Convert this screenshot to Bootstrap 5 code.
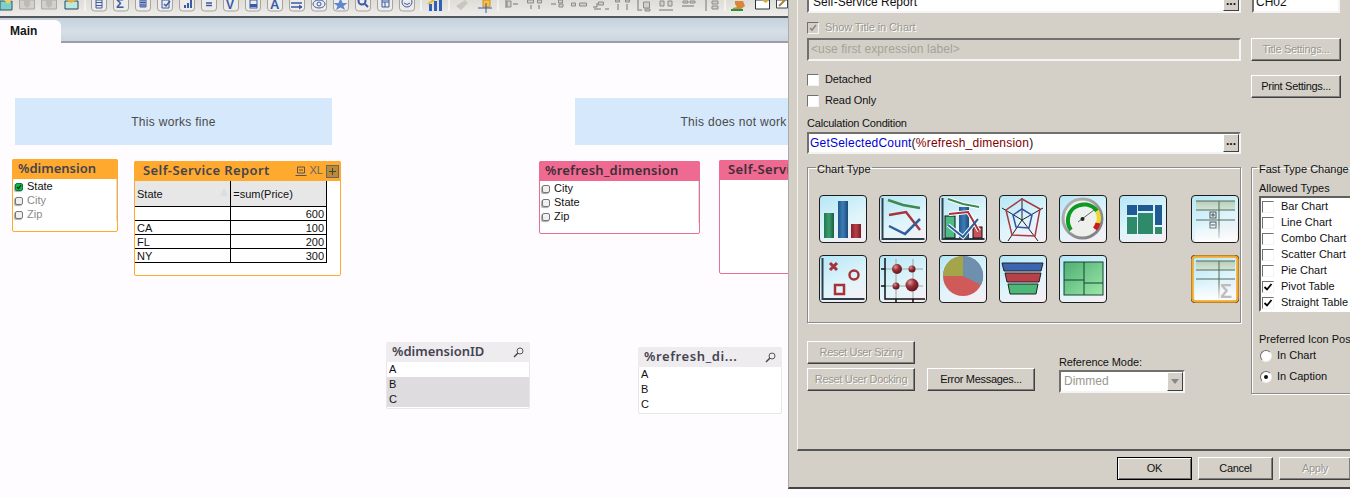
<!DOCTYPE html>
<html lang="en"><head><meta charset="utf-8"><title>Self-Service Report</title>
<link href="https://cdn.jsdelivr.net/npm/bootstrap@5.3.0/dist/css/bootstrap.min.css" rel="stylesheet">
<style>
html,body{height:497px;overflow:hidden;background:#fefcff;margin:0}
body{font-family:"Liberation Sans",Arial,sans-serif;font-size:11px;color:#111;line-height:1.2}
.app-shell{width:1350px;height:497px}
.main-col{width:788px;flex:none;height:497px}
.tool-strip{height:18px;background:linear-gradient(#dfddd8,#eeece8);border-bottom:2px solid #55565a;flex:none;overflow:hidden}
.tool-strip svg{display:block}
.tab-strip{height:25px;flex:none;background:linear-gradient(#c4d2df,#d6dee8 60%,#cdd4dc);border-bottom:2px solid #9a9ea6;display:flex;align-items:flex-end}
.tab-main{width:61px;height:23px;margin-bottom:-2px;background:#fefcff;border-top-right-radius:6px;font-weight:700;font-size:12px;padding:4px 0 0 10px;color:#151515}
.sheet{position:relative;flex:1;background:#fefcff;overflow:hidden}
.sheet-canvas{position:absolute;inset:0 -20px 0 0}
.note-box{position:absolute;top:55px;width:317px;height:47px;padding-top:2px;background:#d6e8fb;color:#4a4a4a;font-size:12px;letter-spacing:.3px;display:flex;align-items:center;justify-content:center}
.note-a{left:15px}.note-b{left:575px}
.qv-obj{position:absolute;background:#fff;border:1px solid #ccc;border-radius:2px}
.qv-cap{height:20px;display:flex;align-items:center;font-family:"Noto Sans",sans-serif;font-weight:600;font-size:13px;color:#444450;white-space:nowrap;overflow:hidden;margin:-1px -1px 0;padding-left:6px;border-radius:2px 2px 0 0}
.cap-orange{background:#ffa92e}.cap-pink{background:#ee6a90;color:#3f2d39}.cap-grey{background:#efecef}
.cap-wide{letter-spacing:.4px;padding-left:9px}
.cap-ref{letter-spacing:.25px}
.cap-rdi{letter-spacing:.6px}
.bd-orange{border-color:#ffa92e}.bd-pink{border-color:#e96f91}
.obj-dim{left:12px;top:116px;width:106px;height:73px}
.obj-ssr{left:134px;top:118px;width:207px;height:115px}
.obj-ref{left:539px;top:118px;width:161px;height:73px}
.obj-ssr2{left:719px;top:117px;width:207px;height:114px}
.obj-did{left:386px;top:299px;width:144px;height:67px;border-color:#e8e6e8}
.obj-rdi{left:638px;top:304px;width:144px;height:67px;border-color:#e8e6e8}
.lb-row{height:14px;display:flex;align-items:center;gap:4px;padding-left:2px;font-size:11px}
.lb-list{padding-top:1px;border-right:1px solid #ddd;height:42px}
.lb-ex{color:#8a8a8a}
.lb-box{width:8px;height:8px;border:1px solid #777;border-radius:2px;background:#f0f0f0;box-shadow:-1px 1px 1px #aaa;flex:none}
.lb-on{background:#11b93a;border-color:#075;position:relative}
.lb-on svg{display:block}
.cap-tools{margin-left:auto;display:flex;align-items:center;gap:3px;padding-right:2px;font-size:11px;font-weight:400;color:#666;letter-spacing:0;font-family:"Liberation Sans",sans-serif}
.grid-tbl{width:192px;border-collapse:collapse;table-layout:fixed;font-size:11px}
.grid-tbl td,.grid-tbl th{border:1px solid #000;border-top:0;height:14px;padding:1px 2px 0;font-weight:400;line-height:12px}
.grid-tbl th{background:#e8e7e8;height:25px;border-bottom:1px solid #000}
.grid-tbl tr>*:first-child{border-left:0}
.grid-tbl .num{text-align:right}
.sort-tri{float:right;width:0;height:0;border:4px solid transparent;border-bottom:8px solid #ddd;margin-top:-4px}
.vl-row{height:15px;padding-left:2px;font-size:11px;display:flex;align-items:center}
.vl-alt{background:#dedcde}
.mag{margin-left:auto;margin-right:6px}
.dlg{width:562px;height:489px;flex:none;background:#d4d0c8;position:relative;border-left:1px solid #aaa;border-bottom:2px solid #444;overflow:hidden}
.dlg-panel{height:451px;margin-left:8px;border-left:1px solid #f4f2ee;border-bottom:2px solid #555;padding-left:9px;display:flex;gap:10px}
.col-l{width:434px;flex:none}
.col-r{width:110px;flex:none}
.fld{background:#fff;border:2px solid;border-color:#707070 #f4f4f4 #f4f4f4 #707070;display:flex;align-items:center;padding-left:2px;overflow:hidden;white-space:nowrap;font-size:12px}
.fld-top{height:21px;margin-top:-8px;padding-left:4px}
.fld-dis{background:#d4d0c8;height:23px;color:#a5a29b;margin-top:4px;letter-spacing:.1px}
.fld-calc{height:22px;margin-top:2px;padding-left:1px;letter-spacing:.22px}
.dots{margin-left:auto;width:16px;height:100%;background:#d4d0c8;border:1px solid;border-color:#fff #404040 #404040 #fff;font-weight:700;line-height:12px;text-align:center;flex:none;letter-spacing:0}
.kw{color:#0000d8}.fn{color:#800000}.pl{color:#111}
.chk-row{display:flex;align-items:center;gap:6px;height:12px;font-size:11px;letter-spacing:-.1px}
.win-chk{width:12px;height:12px;flex:none;background:#fff;border:1px solid;border-color:#707070 #f4f4f4 #f4f4f4 #707070}
.win-chk svg{display:block}
.chk-dis{background:#d4d0c8}
.txt-dis{color:#9a978f;text-shadow:1px 1px 0 #fff}
.row-a{margin-top:9px}.row-b{margin-top:13px}
.lbl-calc{margin-top:9px;height:14px;font-size:11px;letter-spacing:-.2px;line-height:14px}
.grp{border:1px solid #8a8a8a;box-shadow:inset 1px 1px 0 #fff,1px 1px 0 #fff;padding:0;margin:0}
.grp legend{float:none;width:auto;font-size:11px;line-height:12px;margin:0 0 0 8px;padding:4px 1px 0}
.grp-chart{margin-top:5px;height:164px}
.icon-grid{display:grid;grid-template-columns:repeat(7,48px);grid-auto-rows:48px;gap:12px;padding:20px 0 0 11px}
.chart-ico{width:48px;height:48px;border:1px solid #1c1c1c;border-radius:4px;background:linear-gradient(155deg,#b5e6f6,#dff5fb 55%,#f8eef3);overflow:hidden}
.chart-ico svg{display:block}
.ico-pivot{margin-left:12px}
.ico-sel{grid-column:7;margin-left:12px;border:none;box-shadow:0 0 0 1px #222 inset}
.btn.dlg-btn,.btn.dlg-btn:disabled{background:#d4d0c8;color:#111;font-size:11px;letter-spacing:-.3px;line-height:1;padding:0;border-radius:0;border:1px solid;border-color:#fff #404040 #404040 #fff;box-shadow:inset -1px -1px 0 #808080;opacity:1;white-space:nowrap;font-family:inherit;height:23px}
.btn.dlg-btn:disabled{color:#9a978f;text-shadow:1px 1px 0 #fff}
.bt-r{width:108px}
.bt-err{margin-left:12px}
.bt-s{width:90px}
.bt-title{margin-top:25px}
.bt-print{margin-top:14px}
.low-row{margin-top:18px;display:flex;align-items:flex-end}
.ref-wrap{margin-left:24px;width:126px;margin-bottom:-2px}
.ref-lbl{font-size:11px;letter-spacing:-.1px;line-height:14px;margin-bottom:1px}
.combo{height:23px;background:#fff;border:2px solid;border-color:#707070 #f4f4f4 #f4f4f4 #707070;display:flex;align-items:center;padding-left:3px;color:#9a978f;font-size:12px}
.combo-arw{margin-left:auto;width:16px;height:100%;background:#d4d0c8;border:1px solid;border-color:#fff #404040 #404040 #fff;display:flex;align-items:center;justify-content:center}
.combo-arw i{display:block;border:4px solid transparent;border-top:5px solid #888;margin-top:4px}
.fld-id{height:21px;margin:-8px 10px 0 1px;width:88px}
.grp-fast{width:140px;margin-top:61px;height:235px;padding-left:7px}
.grp .lg-fast{margin-left:-2px;padding:4px 2px 0;white-space:nowrap}
.lbl-allowed{font-size:11px;line-height:14px;margin-top:6px}
.type-list{margin-top:1px;height:116px;background:#fff;border:2px solid;border-color:#606060 #fff #fff #606060;padding-top:1px}
.type-row{height:16px;display:flex;align-items:center;gap:7px;font-size:11px;padding-left:1px;white-space:nowrap}
.pref-lbl{font-size:11px;line-height:14px;margin-top:20px;white-space:nowrap}
.rad-row{display:flex;align-items:center;gap:5px;height:12px;font-size:11px;margin-top:4px;padding-left:1px}
.rad-row.rd2{margin-top:9px}
.rad{width:12px;height:12px;border-radius:50%;background:#fff;border:1px solid;border-color:#707070 #eee #eee #707070;flex:none;display:flex;align-items:center;justify-content:center}
.rad i{display:block;width:4px;height:4px;background:#111;border-radius:50%}
.dlg-foot{height:36px;display:flex;justify-content:flex-end;padding-top:6px;gap:6px}
.bt-f{width:75px;height:23px}
.btn.bt-ok{border:1px solid #000;box-shadow:inset 1px 1px 0 #fff,inset -1px -1px 0 #707070}
.bt-apply{margin-right:-1px;width:72px}
.defs-svg{position:absolute;width:0;height:0}
</style></head><body>
<svg class="defs-svg" aria-hidden="true"><defs>
<linearGradient id="gG" x1="0" x2="1"><stop offset="0" stop-color="#1e7a50"/><stop offset=".5" stop-color="#3d9c70"/><stop offset="1" stop-color="#185f3f"/></linearGradient>
<linearGradient id="gB" x1="0" x2="1"><stop offset="0" stop-color="#1f5a92"/><stop offset=".5" stop-color="#3f7cb5"/><stop offset="1" stop-color="#1a4977"/></linearGradient>
<linearGradient id="gR" x1="0" x2="1"><stop offset="0" stop-color="#8c2028"/><stop offset=".5" stop-color="#b64048"/><stop offset="1" stop-color="#7a1a22"/></linearGradient>
<radialGradient id="gBall" cx=".35" cy=".3" r=".75"><stop offset="0" stop-color="#d89a9a"/><stop offset=".45" stop-color="#9a2e36"/><stop offset="1" stop-color="#5d1519"/></radialGradient>
<linearGradient id="gT" x1="0" x2="0" y1="0" y2="1"><stop offset="0" stop-color="#b6cdb8"/><stop offset="1" stop-color="#d3e6d6"/></linearGradient>
<linearGradient id="gF" x1="0" x2="0" y1="0" y2="1"><stop offset="0" stop-color="#fff" stop-opacity="0"/><stop offset="1" stop-color="#fff" stop-opacity=".9"/></linearGradient>
<linearGradient id="gM" x1="0" y1="0" x2="1" y2="1"><stop offset="0" stop-color="#4fae74"/><stop offset="1" stop-color="#9ce8a8"/></linearGradient>
<linearGradient id="gGa" x1="0" y1="0" x2="1" y2="1"><stop offset="0" stop-color="#bbb"/><stop offset="1" stop-color="#777"/></linearGradient>
</defs></svg>
<div class="app-shell d-flex">
<div class="main-col d-flex flex-column">
<div class="tool-strip">
<svg width="788" height="16" viewBox="0 0 788 16" role="img" aria-label="Toolbar">
<g fill="#edecE8" stroke="#a7a49d">
<rect x="91.5" y="-6" width="15" height="17" rx="3"/><rect x="113.5" y="-6" width="15" height="17" rx="3"/><rect x="135.5" y="-6" width="15" height="17" rx="3"/><rect x="157.5" y="-6" width="15" height="17" rx="3"/><rect x="179.5" y="-6" width="15" height="17" rx="3"/><rect x="201.5" y="-6" width="15" height="17" rx="3"/><rect x="223.5" y="-6" width="15" height="17" rx="3"/><rect x="245.5" y="-6" width="15" height="17" rx="3"/><rect x="267.5" y="-6" width="15" height="17" rx="3"/><rect x="289.5" y="-6" width="15" height="17" rx="3"/><rect x="311.5" y="-6" width="15" height="17" rx="3"/><rect x="333.5" y="-6" width="15" height="17" rx="3"/><rect x="355.5" y="-6" width="15" height="17" rx="3"/><rect x="377.5" y="-6" width="15" height="17" rx="3"/><rect x="399.5" y="-6" width="15" height="17" rx="3"/>
</g>
<path d="M0 1h12v9H0z" fill="#7fd0c8" stroke="#356"/><path d="M4 0l4 4 4-4z" fill="#f0d060"/>
<path d="M19.500 0h15v9h-15z M41.500 0h15v9h-15z" fill="#d2d0ca" stroke="#aaa"/><path d="M24 0h6v5l-3 3-3-3zM46 0h6v5l-3 3-3-3z" fill="#bdbab3"/>
<path d="M65 1h13v8H65z" fill="#bfe8dc" stroke="#246"/><path d="M66 0l5 3 6-3z" fill="#e8b040"/>
<path d="M85 0v11" stroke="#fff"/>
<g fill="none" stroke="#3a5aa8">
<path d="M96 0h6v8h-6zM96 2.500h6M96 5.500h6"/>
<path d="M140 0h6v7h-6zM142 0v7M144 0v7M140 2.500h6M140 5h6"/>
<path d="M162 0h7v8h-7z"/><path d="M164 4l2 2 4-5" stroke-width="1.500"/>
<path d="M206 3h6M206 5.500h6" stroke-width="1.600"/>
<rect x="250" y="0" width="7" height="8"/><path d="M250 5.500h7" stroke-width="3"/>
<path d="M291 3h11M291 7h11" stroke-width="1.500"/><path d="M299 5l3 2-3 2" fill="#3a5aa8"/>
<ellipse cx="319" cy="4" rx="6" ry="4"/><circle cx="319" cy="4" r="2"/>
<circle cx="362" cy="1" r="3.500" stroke-width="2"/><path d="M365 4l3 3" stroke-width="2"/>
<path d="M382 0h7v7h-7zM382 2h7M385 2v5"/>
<circle cx="407" cy="2" r="5"/><path d="M404 3q3 3 6 0"/>
</g>
<g fill="#3a5aa8">
<text x="116" y="8" font-family="Liberation Sans" font-weight="700" font-size="13">Σ</text>
<text x="226" y="9" font-family="Liberation Sans" font-weight="700" font-size="12">V</text>
<text x="270" y="9" font-family="Liberation Sans" font-weight="700" font-size="13">A</text>
<path d="M184 5h2v3h-2zM187 3h2v5h-2zM190 0h2v8h-2z"/>
<path d="M340.500 -2l2 5h5l-4 3 1.500 4-4.500-2.500-4.500 2.500 1.500-4-4-3h5z" fill="#5f86d0"/>
</g>
<path d="M421 0v11M449 0v11M498 0v11M725 0v11" stroke="#fff"/>
<path d="M429 4h3v7h-3zM434 1h3v10h-3zM439 0h3v11h-3z" fill="#2d62b8"/><path d="M428 4l6-4" stroke="#e8b828" stroke-width="2"/>
<path d="M456 6l9-6 3 3-7 7z" fill="#c9c6c0"/><path d="M483 0h7v7h-7z" fill="#f5bf4a" stroke="#d09020"/><path d="M478 8h14M486 3v10" stroke="#3a5aa8"/>
<g fill="#d2d0ca" stroke="#8e8c86">
<path d="M507 1h4v6h-4zM527.500 0h6v3h-6zM537.500 0h4v3h-4zM558.500 0h4v3h-4zM559 4h4v3h-4zM571.500 3h4v3h-4zM579.500 3h7v3h-7zM598.500 2h5v3h-5zM615.500 0h4v2h-4zM625.500 0h4v2h-4zM643.500 2h6v6h-6zM645 9h5v2h-5zM660 1h4v5h-4zM668 1h4v5h-4zM683 1h5v2h-5zM690 1h5v2h-5zM712 1h6v3h-6zM712 6h6v3h-6z"/>
</g>
<g stroke="#777" fill="none">
<path d="M506 0v8M513 4h5M531 5v4M539 5v4M551 4h5M593 7h4v-4M594 9h7M605 9h4M618 4v6M627 4v6M638 0v9M637 10h5M659 10h14M682 6h12M706 0v11"/>
</g>
<path d="M735 1l8 0 2 5-4 3v2l4 0v0h-13l1-3 4-1-2-3z" fill="#d9853a"/><path d="M731 9h12v2h-12z" fill="#1a9a3a"/>
<path d="M755.500 0h14v9h-14z" fill="#fff" stroke="#234"/><path d="M761 0h8l-3 3z" fill="#d8a848"/>
<path d="M776.500 0h11v8h-11z" fill="#fff" stroke="#345"/><path d="M779 6l6-6" stroke="#b08030" stroke-width="2"/>
</svg>
</div>
<div class="tab-strip"><div class="tab-main">Main</div></div>
<div class="sheet"><div class="sheet-canvas">
<div class="note-box note-a">This works fine</div>
<div class="note-box note-b">This does not work</div>

<div class="qv-obj bd-orange obj-dim">
<div class="qv-cap cap-orange">%dimension</div>
<div class="lb-list">
<div class="lb-row"><span class="lb-box lb-on"><svg width="6" height="6" viewBox="0 0 6 6"><path d="M1 3l1.500 1.500L5 1" fill="none" stroke="#021" stroke-width="1.200"/></svg></span>State</div>
<div class="lb-row lb-ex"><span class="lb-box"></span>City</div>
<div class="lb-row lb-ex"><span class="lb-box"></span>Zip</div>
</div></div>

<div class="qv-obj bd-orange obj-ssr">
<div class="qv-cap cap-orange cap-wide">Self-Service Report
<span class="cap-tools"><svg width="12" height="11" viewBox="0 0 12 11"><path d="M2.500 1h7v6h-7zM.5 9.500h11M4 4h4" fill="none" stroke="#555"/></svg><span>XL</span><svg width="13" height="13" viewBox="0 0 13 13"><rect x=".5" y=".5" width="12" height="12" fill="#b98a38" stroke="#666"/><path d="M3 6.500h7M6.500 3v7" stroke="#443"/></svg></span></div>
<table class="grid-tbl"><tbody>
<tr><th>State<span class="sort-tri"></span></th><th>=sum(Price)</th></tr>
<tr><td></td><td class="num">600</td></tr>
<tr><td>CA</td><td class="num">100</td></tr>
<tr><td>FL</td><td class="num">200</td></tr>
<tr><td>NY</td><td class="num">300</td></tr>
</tbody></table></div>

<div class="qv-obj bd-pink obj-ref">
<div class="qv-cap cap-pink cap-ref">%refresh_dimension</div>
<div class="lb-list">
<div class="lb-row"><span class="lb-box"></span>City</div>
<div class="lb-row"><span class="lb-box"></span>State</div>
<div class="lb-row"><span class="lb-box"></span>Zip</div>
</div></div>

<div class="qv-obj bd-pink obj-ssr2"><div class="qv-cap cap-pink cap-wide">Self-Service Report</div></div>

<div class="qv-obj obj-did">
<div class="qv-cap cap-grey">%dimensionID<svg class="mag" width="11" height="11" viewBox="0 0 11 11"><circle cx="7" cy="4" r="3" fill="#eee" stroke="#555"/><path d="M5 6L1 10" stroke="#444" stroke-width="1.500"/></svg></div>
<div class="vl-row">A</div><div class="vl-row vl-alt">B</div><div class="vl-row vl-alt">C</div></div>

<div class="qv-obj obj-rdi">
<div class="qv-cap cap-grey cap-rdi">%refresh_di...<svg class="mag" width="11" height="11" viewBox="0 0 11 11"><circle cx="7" cy="4" r="3" fill="#eee" stroke="#555"/><path d="M5 6L1 10" stroke="#444" stroke-width="1.500"/></svg></div>
<div class="vl-row">A</div><div class="vl-row">B</div><div class="vl-row">C</div></div>
</div></div>
</div>

<div class="dlg">
<div class="dlg-panel">
<div class="col-l">
<div class="fld fld-top">Self-Service Report<span class="dots">...</span></div>
<div class="chk-row row-a txt-dis"><span class="win-chk chk-dis"><svg width="10" height="10" viewBox="0 0 10 10"><path d="M2 5l2 2 4-5" fill="none" stroke="#8a8880" stroke-width="1.600"/></svg></span>Show Title in Chart</div>
<div class="fld fld-dis">&lt;use first expression label&gt;</div>
<div class="chk-row row-b"><span class="win-chk"></span>Detached</div>
<div class="chk-row row-a"><span class="win-chk"></span>Read Only</div>
<div class="lbl-calc">Calculation Condition</div>
<div class="fld fld-calc"><span class="kw">GetSelectedCount</span><span class="pl">(</span><span class="fn">%refresh_dimension</span><span class="pl">)</span><span class="dots">...</span></div>

<fieldset class="grp grp-chart"><legend>Chart Type</legend>
<div class="icon-grid">
<div class="chart-ico"><svg width="46" height="46" viewBox="0 0 46 46"><rect x="4" y="17" width="10" height="25" fill="url(#gG)"/><rect x="18" y="5" width="10" height="37" fill="url(#gB)"/><rect x="31" y="28" width="10" height="14" fill="url(#gR)"/></svg></div>
<div class="chart-ico"><svg width="46" height="46" viewBox="0 0 46 46"><path d="M2.500 2v41h42" fill="none" stroke="#30404a" stroke-width="2"/><g fill="none" stroke-width="2.500"><path d="M8 4l15 5 17 3" stroke="#3c8a50"/><path d="M9 19l17-3 14 18" stroke="#a8323a"/><path d="M9 30l16 8 15-15" stroke="#2f5fa0"/></g></svg></div>
<div class="chart-ico"><svg width="46" height="46" viewBox="0 0 46 46"><path d="M2.500 2v41h42" fill="none" stroke="#30404a" stroke-width="2"/><rect x="5" y="20" width="10" height="22" fill="#4cbc85" stroke="#111"/><rect x="19" y="11" width="10" height="31" fill="url(#gB)"/><rect x="33" y="31" width="9" height="11" fill="#c9535a" stroke="#111"/><g fill="none"><path d="M8 3l15 5 16 3" stroke="#fff" stroke-width="4"/><path d="M9 18l19-2 11 19" stroke="#fff" stroke-width="4"/><path d="M8 29l15 12 15-18" stroke="#fff" stroke-width="4"/><path d="M8 3l15 5 16 3" stroke="#3c8a50" stroke-width="2"/><path d="M9 18l19-2 11 19" stroke="#a8323a" stroke-width="2"/><path d="M8 29l15 12 15-18" stroke="#2f5fa0" stroke-width="2"/></g></svg></div>
<div class="chart-ico"><svg width="46" height="46" viewBox="0 0 46 46"><path d="M22 24L22 2M22 24L43 12M22 24L38 45M22 24L8 45M22 24L2 12" stroke="#222" fill="none"/><path d="M22 3l18 10-5 27-23-1-6-25z" fill="none" stroke="#a83a44" stroke-width="1.500"/><path d="M22 13l10 6-3 13-13-1-3-12z" fill="none" stroke="#3a50a8" stroke-width="1.500"/></svg></div>
<div class="chart-ico"><svg width="46" height="46" viewBox="0 0 46 46"><circle cx="22.500" cy="22.500" r="21" fill="url(#gGa)"/><circle cx="22.500" cy="22.500" r="18" fill="#eef0ee"/><path d="M11 34A16 16 0 1 1 37 15" fill="none" stroke="#0c9a22" stroke-width="4"/><path d="M37 15A16 16 0 0 1 38 27" fill="none" stroke="#ecd92a" stroke-width="4"/><path d="M38 27A16 16 0 0 1 35 33" fill="none" stroke="#d01818" stroke-width="5"/><path d="M18 26L34 14" stroke="#666"/><circle cx="22.500" cy="23" r="2" fill="#222"/></svg></div>
<div class="chart-ico"><svg width="46" height="46" viewBox="0 0 46 46"><rect x="7" y="9" width="10" height="10" fill="#1f5a92"/><rect x="18" y="9" width="15" height="6" fill="#1f5a92"/><rect x="7" y="21" width="10" height="17" fill="#2e8a6a"/><rect x="18" y="17" width="15" height="21" fill="#2e8a6a"/><rect x="35" y="9" width="7" height="20" fill="#1f5a92"/><rect x="35" y="31" width="7" height="7" fill="#2e8a6a"/></svg></div>
<div class="chart-ico ico-pivot"><svg width="46" height="46" viewBox="0 0 46 46"><rect x="4" y="5" width="39" height="9" fill="url(#gT)"/><path d="M4 5h39M4 14h39M4 24h39M27 5v37" stroke="#55685a" fill="none"/><rect x="18" y="16" width="6" height="6" fill="none" stroke="#555"/><path d="M19 19h4M21 17v4" stroke="#555"/><rect x="18" y="26" width="6" height="6" fill="none" stroke="#555"/><path d="M19 29h4" stroke="#555"/><rect x="3" y="28" width="42" height="18" fill="url(#gF)"/></svg></div>
<div class="chart-ico"><svg width="46" height="46" viewBox="0 0 46 46"><path d="M2.500 2v41h42" fill="none" stroke="#30404a" stroke-width="2"/><path d="M10 7l7 7M17 7l-7 7" stroke="#a8323a" stroke-width="3"/><circle cx="34" cy="19" r="4.500" fill="none" stroke="#a8323a" stroke-width="2.500"/><rect x="15" y="29" width="9" height="9" fill="none" stroke="#a8323a" stroke-width="2.500"/></svg></div>
<div class="chart-ico"><svg width="46" height="46" viewBox="0 0 46 46"><path d="M5 13h38M5 30h38M16 3v40M33 3v40" stroke="#9aa8a8" fill="none"/><path d="M5 2v41h40M1 13h4M1 30h4M16 43v3M33 43v3" fill="none" stroke="#111" stroke-width="1.500"/><circle cx="17" cy="13" r="5" fill="url(#gBall)"/><circle cx="32" cy="13" r="3.500" fill="url(#gBall)"/><circle cx="16" cy="30" r="3.500" fill="url(#gBall)"/><circle cx="32" cy="29" r="6.500" fill="url(#gBall)"/></svg></div>
<div class="chart-ico"><svg width="46" height="46" viewBox="0 0 46 46"><circle cx="23" cy="20" r="20" fill="#cf5a58"/><path d="M23 20V0A20 20 0 0 0 3 20z" fill="#a3a548"/><path d="M23 20V0A20 20 0 0 1 41 29z" fill="#6f8fae"/></svg></div>
<div class="chart-ico"><svg width="46" height="46" viewBox="0 0 46 46"><path d="M2 7h41l-2 8H4z" fill="#3d64b0" stroke="#222"/><path d="M5 17h36l-2 9H7z" fill="#b84048" stroke="#222"/><path d="M8 28h30l-2 10H10z" fill="#4cb878" stroke="#222"/></svg></div>
<div class="chart-ico"><svg width="46" height="46" viewBox="0 0 46 46"><rect x="4" y="6" width="39" height="33" fill="url(#gM)" stroke="#143"/><path d="M24 6v33M4 24h20M24 27h19" stroke="#143" fill="none"/></svg></div>
<div class="chart-ico ico-sel"><svg width="48" height="48" viewBox="0 0 48 48"><rect x="1.500" y="1.500" width="45" height="45" rx="3" fill="none" stroke="#f5a72a" stroke-width="2.500"/><rect x="5" y="6" width="39" height="9" fill="url(#gT)"/><path d="M5 6h39M5 15h39M5 24h39M28 6v38" stroke="#55685a" fill="none"/><rect x="4" y="28" width="41" height="17" fill="url(#gF)"/><text x="29" y="43" font-family="Liberation Sans" font-weight="700" font-size="20" fill="#bdbdbd">Σ</text></svg></div>
</div>
</fieldset>

<div class="low-row">
<div class="d-flex flex-column gap-1 flex-none">
<button class="btn dlg-btn bt-r" disabled>Reset User Sizing</button>
<div class="d-flex"><button class="btn dlg-btn bt-r" disabled>Reset User Docking</button><button class="btn dlg-btn bt-r bt-err">Error Messages...</button></div>
</div>
<div class="ref-wrap"><div class="ref-lbl">Reference Mode:</div>
<div class="combo">Dimmed<span class="combo-arw"><i></i></span></div></div>
</div>
</div>

<div class="col-r">
<div class="fld fld-id">CH02</div>
<button class="btn dlg-btn bt-s bt-title d-block" disabled>Title Settings...</button>
<button class="btn dlg-btn bt-s bt-print d-block">Print Settings...</button>
<fieldset class="grp grp-fast"><legend class="lg-fast">Fast Type Change</legend>
<div class="lbl-allowed">Allowed Types</div>
<div class="type-list">
<div class="type-row"><span class="win-chk"></span>Bar Chart</div>
<div class="type-row"><span class="win-chk"></span>Line Chart</div>
<div class="type-row"><span class="win-chk"></span>Combo Chart</div>
<div class="type-row"><span class="win-chk"></span>Scatter Chart</div>
<div class="type-row"><span class="win-chk"></span>Pie Chart</div>
<div class="type-row"><span class="win-chk"><svg width="10" height="10" viewBox="0 0 10 10"><path d="M1.500 5l2.500 2.500L8.500 2" fill="none" stroke="#000" stroke-width="1.800"/></svg></span>Pivot Table</div>
<div class="type-row"><span class="win-chk"><svg width="10" height="10" viewBox="0 0 10 10"><path d="M1.500 5l2.500 2.500L8.500 2" fill="none" stroke="#000" stroke-width="1.800"/></svg></span>Straight Table</div>
</div>
<div class="pref-lbl">Preferred Icon Position</div>
<div class="rad-row"><span class="rad"></span>In Chart</div>
<div class="rad-row rd2"><span class="rad"><i></i></span>In Caption</div>
</fieldset>
</div>
</div>
<div class="dlg-foot">
<button class="btn dlg-btn bt-f bt-ok">OK</button>
<button class="btn dlg-btn bt-f">Cancel</button>
<button class="btn dlg-btn bt-f bt-apply" disabled>Apply</button>
</div>
</div>
</div>
<script src="https://cdn.jsdelivr.net/npm/bootstrap@5.3.0/dist/js/bootstrap.bundle.min.js"></script>
</body></html>
